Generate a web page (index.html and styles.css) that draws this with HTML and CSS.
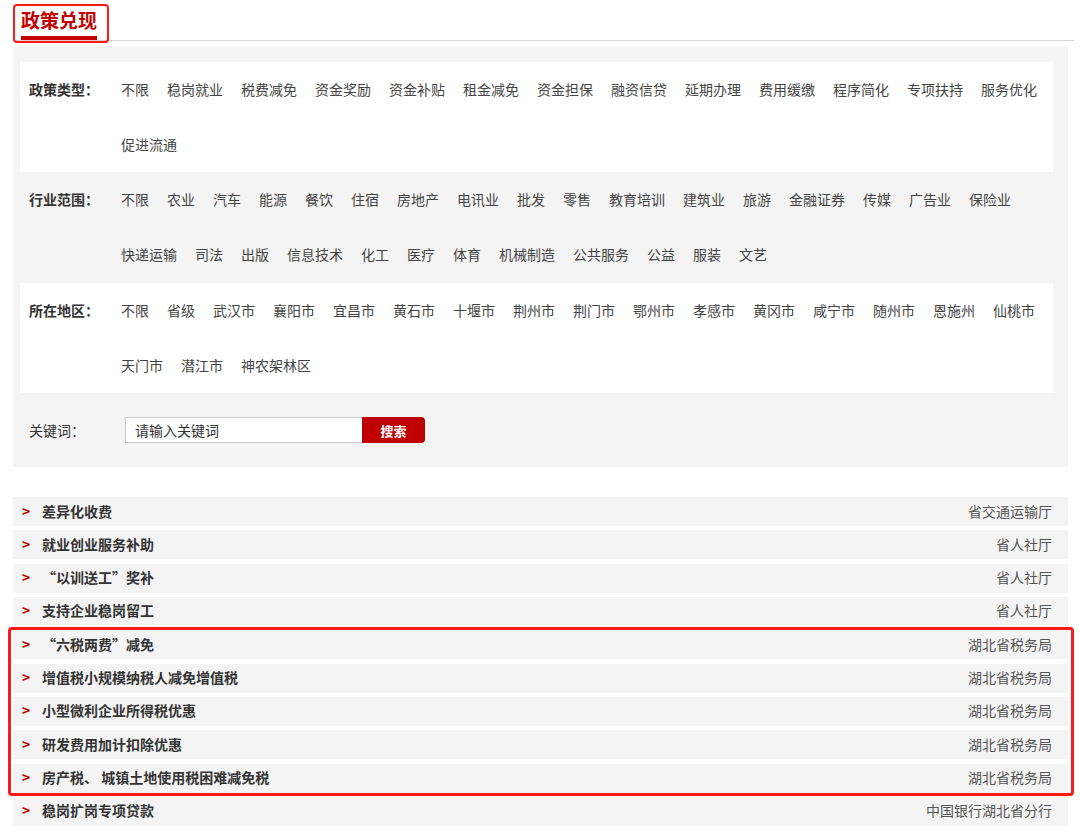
FILE: index.html
```html
<!DOCTYPE html>
<html lang="zh-CN">
<head>
  <meta charset="UTF-8">
  <meta name="viewport" content="width=device-width, initial-scale=1.0">
  <title>政策兑现</title>
  <link rel="stylesheet" href="styles.css">
</head>
<body>
  <div class="page">
    <div class="tab-head">
      <h2 class="tab-title">政策兑现</h2>
    </div>

    <div class="filter">
      <div class="filter-row row-white">
        <span class="filter-label">政策类型：</span>
        <div class="filter-items">
          <a>不限</a><a>稳岗就业</a><a>税费减免</a><a>资金奖励</a><a>资金补贴</a><a>租金减免</a><a>资金担保</a><a>融资信贷</a><a>延期办理</a><a>费用缓缴</a><a>程序简化</a><a>专项扶持</a><a>服务优化</a><a>促进流通</a>
        </div>
      </div>
      <div class="filter-row">
        <span class="filter-label">行业范围：</span>
        <div class="filter-items">
          <a>不限</a><a>农业</a><a>汽车</a><a>能源</a><a>餐饮</a><a>住宿</a><a>房地产</a><a>电讯业</a><a>批发</a><a>零售</a><a>教育培训</a><a>建筑业</a><a>旅游</a><a>金融证券</a><a>传媒</a><a>广告业</a><a>保险业</a><a>快递运输</a><a>司法</a><a>出版</a><a>信息技术</a><a>化工</a><a>医疗</a><a>体育</a><a>机械制造</a><a>公共服务</a><a>公益</a><a>服装</a><a>文艺</a>
        </div>
      </div>
      <div class="filter-row row-white">
        <span class="filter-label">所在地区：</span>
        <div class="filter-items">
          <a>不限</a><a>省级</a><a>武汉市</a><a>襄阳市</a><a>宜昌市</a><a>黄石市</a><a>十堰市</a><a>荆州市</a><a>荆门市</a><a>鄂州市</a><a>孝感市</a><a>黄冈市</a><a>咸宁市</a><a>随州市</a><a>恩施州</a><a>仙桃市</a><a>天门市</a><a>潜江市</a><a>神农架林区</a>
        </div>
      </div>
      <div class="keyword-row">
        <span class="keyword-label">关键词：</span>
        <input class="keyword-input" type="text" value="请输入关键词">
        <button class="keyword-btn">搜索</button>
      </div>
    </div>

    <ul class="policy-list">
      <li><span class="arrow">&gt;</span><span class="policy-name">差异化收费</span><span class="policy-dept">省交通运输厅</span></li>
      <li><span class="arrow">&gt;</span><span class="policy-name">就业创业服务补助</span><span class="policy-dept">省人社厅</span></li>
      <li><span class="arrow">&gt;</span><span class="policy-name">“以训送工”奖补</span><span class="policy-dept">省人社厅</span></li>
      <li><span class="arrow">&gt;</span><span class="policy-name">支持企业稳岗留工</span><span class="policy-dept">省人社厅</span></li>
      <li><span class="arrow">&gt;</span><span class="policy-name">“六税两费”减免</span><span class="policy-dept">湖北省税务局</span></li>
      <li><span class="arrow">&gt;</span><span class="policy-name">增值税小规模纳税人减免增值税</span><span class="policy-dept">湖北省税务局</span></li>
      <li><span class="arrow">&gt;</span><span class="policy-name">小型微利企业所得税优惠</span><span class="policy-dept">湖北省税务局</span></li>
      <li><span class="arrow">&gt;</span><span class="policy-name">研发费用加计扣除优惠</span><span class="policy-dept">湖北省税务局</span></li>
      <li><span class="arrow">&gt;</span><span class="policy-name">房产税、 城镇土地使用税困难减免税</span><span class="policy-dept">湖北省税务局</span></li>
      <li><span class="arrow">&gt;</span><span class="policy-name">稳岗扩岗专项贷款</span><span class="policy-dept">中国银行湖北省分行</span></li>
    </ul>

    <!-- highlight frames drawn over the page -->
    <div class="mark mark-title"></div>
    <div class="mark mark-list"></div>
  </div>
</body>
</html>
```

FILE: styles.css
```css
body {
  margin: 0;
  padding: 0;
  background-color: #ffffff;
  font-family: "Noto Sans CJK SC", "Microsoft YaHei", "Noto Sans", sans-serif;
  font-size: 14px;
  color: #333333;
}

.page {
  position: relative;
  width: 1055px;
  padding: 0 12px 0 13px;
}

.tab-head {
  height: 40px;
  border-bottom: 1px solid #d4d4d4;
  margin-right: -6px;
}

.tab-title {
  display: inline-block;
  margin: 0 0 0 8px;
  padding-top: 3px;
  height: 33px;
  line-height: 33px;
  font-size: 19px;
  font-weight: bold;
  color: #c00000;
  border-bottom: 4px solid #c80000;
}

.filter {
  margin-top: 5px;
  padding: 16px 15px 0 7px;
  background-color: #f4f4f4;
}

.filter-row {
  display: flex;
  height: 110px;
  padding-left: 9px;
  line-height: 55px;
}

.row-white {
  background-color: #ffffff;
}

.filter-row:nth-child(2) {
  height: 111px;
}

.filter-label {
  flex: none;
  width: 92px;
  font-weight: bold;
  color: #333333;
}

.filter-items {
  flex: 1;
  display: flex;
  flex-wrap: wrap;
  align-content: flex-start;
  column-gap: 18px;
}

.filter-items a {
  color: #444444;
  cursor: pointer;
}

.keyword-row {
  display: flex;
  align-items: center;
  height: 74px;
  padding-left: 9px;
}

.keyword-label {
  width: 96px;
  color: #333333;
}

.keyword-input {
  box-sizing: border-box;
  width: 237px;
  height: 26px;
  margin: 0;
  padding: 0 9px;
  border: 1px solid #cccccc;
  border-right: none;
  font-family: inherit;
  font-size: 14px;
  color: #333333;
  outline: none;
}

.keyword-btn {
  width: 63px;
  height: 26px;
  margin: 0;
  padding: 0;
  border: none;
  border-radius: 0 4px 4px 0;
  background-color: #c00000;
  color: #ffffff;
  font-family: inherit;
  font-size: 13px;
  font-weight: bold;
  cursor: pointer;
}

.policy-list {
  list-style: none;
  margin: 30px 0 0;
  padding: 0;
}

.policy-list li {
  display: flex;
  align-items: center;
  box-sizing: border-box;
  height: 29px;
  margin-bottom: 4.33px;
  padding: 0 16px 2px 9px;
  background-color: #f4f4f4;
}

.arrow {
  width: 20px;
  color: #c00000;
  font-weight: bold;
  font-size: 14px;
}

.policy-name {
  flex: 1;
  font-weight: bold;
  color: #333333;
}

.policy-dept {
  color: #555555;
}

.mark {
  position: absolute;
  box-sizing: border-box;
  border: 2px solid #ff1a1a;
  border-radius: 4px;
}

.mark-title {
  left: 13px;
  top: 4px;
  width: 96px;
  height: 39px;
}

.mark-list {
  left: 8px;
  top: 627px;
  width: 1066px;
  height: 169px;
  border-width: 3px;
}
```
